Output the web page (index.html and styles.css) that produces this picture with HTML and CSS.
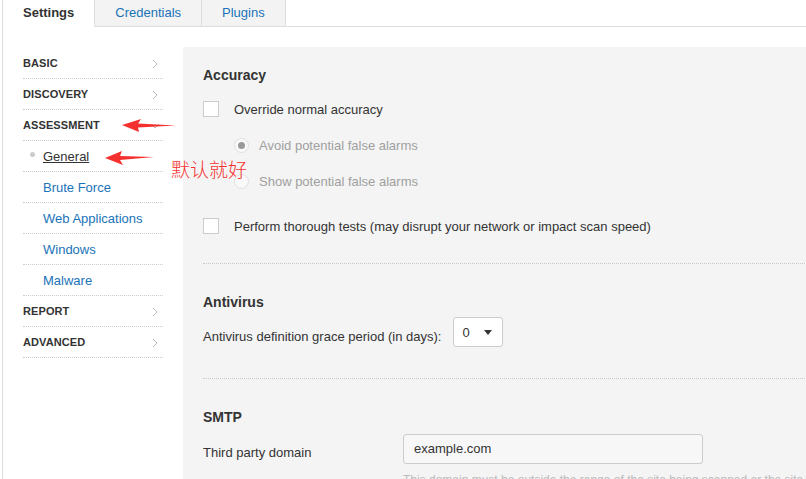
FILE: index.html
```html
<!DOCTYPE html>
<html>
<head>
<meta charset="utf-8">
<link rel="stylesheet" href="styles.css">
</head>
<body>
<div class="page">
  <ul class="tabs">
    <li class="tab active">Settings</li>
    <li class="tab">Credentials</li>
    <li class="tab">Plugins</li>
    <li class="tab-fill"></li>
  </ul>
  <div class="main">
    <nav class="sidebar">
      <div class="nav-item head"><span>BASIC</span><svg class="chev" width="6" height="10" viewBox="0 0 6 10"><path d="M1 1l4 4-4 4" fill="none" stroke="#bbb" stroke-width="1"/></svg></div>
      <div class="nav-item head"><span>DISCOVERY</span><svg class="chev" width="6" height="10" viewBox="0 0 6 10"><path d="M1 1l4 4-4 4" fill="none" stroke="#bbb" stroke-width="1"/></svg></div>
      <div class="nav-item head"><span>ASSESSMENT</span><svg class="chev down" width="10" height="6" viewBox="0 0 10 6"><path d="M1 1l4 4 4-4" fill="none" stroke="#bbb" stroke-width="1"/></svg></div>
      <div class="nav-item sub current"><span class="dot"></span><span class="cur-link">General</span></div>
      <div class="nav-item sub"><span class="link">Brute Force</span></div>
      <div class="nav-item sub"><span class="link">Web Applications</span></div>
      <div class="nav-item sub"><span class="link">Windows</span></div>
      <div class="nav-item sub"><span class="link">Malware</span></div>
      <div class="nav-item head"><span>REPORT</span><svg class="chev" width="6" height="10" viewBox="0 0 6 10"><path d="M1 1l4 4-4 4" fill="none" stroke="#bbb" stroke-width="1"/></svg></div>
      <div class="nav-item head"><span>ADVANCED</span><svg class="chev" width="6" height="10" viewBox="0 0 6 10"><path d="M1 1l4 4-4 4" fill="none" stroke="#bbb" stroke-width="1"/></svg></div>
    </nav>
    <section class="panel">
      <div class="group">
        <h2 class="title">Accuracy</h2>
        <div class="row check-row first"><span class="checkbox"></span><span>Override normal accuracy</span></div>
        <div class="row radio-row r1"><span class="radio checked"></span><span class="muted">Avoid potential false alarms</span></div>
        <div class="row radio-row r2"><span class="radio"></span><span class="muted">Show potential false alarms</span></div>
        <div class="row check-row last"><span class="checkbox"></span><span>Perform thorough tests (may disrupt your network or impact scan speed)</span></div>
      </div>
      <div class="group">
        <h2 class="title">Antivirus</h2>
        <div class="row select-row"><span class="sel-label">Antivirus definition grace period (in days):</span><span class="select"><span>0</span><span class="caret"></span></span></div>
      </div>
      <div class="group last-group">
        <h2 class="title">SMTP</h2>
        <div class="row field-row"><span class="field-label">Third party domain</span><span class="input">example.com</span></div>
        <div class="help">This domain must be outside the range of the site being scanned or the site being scanned</div>
      </div>
    </section>
  </div>
</div>

<svg class="arrow arrow1" width="60" height="20" viewBox="0 0 60 20"><polygon points="0,7 19,1 16,5.5 54,7.5 16,9.5 17,14" fill="#f5312f"/></svg>
<svg class="arrow arrow2" width="60" height="20" viewBox="0 0 60 20"><polygon points="0,7 17,0 15,5 49,6 15,9 18,14" fill="#f5312f"/></svg>
<div class="note">默认就好</div>
</body>
</html>
```

FILE: styles.css
```css
html, body {
  margin: 0;
  padding: 0;
  background: #fff;
}
body {
  font-family: "Liberation Sans", Arial, sans-serif;
  font-size: 13px;
  color: #333;
  width: 806px;
  height: 479px;
  overflow: hidden;
  position: relative;
}
.page {
  margin-left: 2px;
  border-left: 1px solid #ddd;
  height: 479px;
}
.tabs {
  list-style: none;
  margin: 0;
  padding: 0;
  display: flex;
  height: 27px;
}
.tab {
  padding: 0 20px;
  line-height: 26px;
  height: 26px;
  border-right: 1px solid #ddd;
  border-bottom: 1px solid #ddd;
  background: #f3f3f3;
  color: #1a73b8;
}
.tab.active {
  background: #fff;
  color: #333;
  font-weight: bold;
  border-bottom-color: #fff;
}
.tab-fill {
  flex: 1;
  border-bottom: 1px solid #ddd;
}
.main {
  display: flex;
  padding-top: 20px;
  height: 432px;
}
.sidebar {
  width: 140px;
  margin-left: 20px;
  margin-right: 20px;
  padding-top: 1px;
  flex: none;
}
.nav-item {
  height: 30px;
  border-bottom: 1px dotted #ccc;
  display: flex;
  align-items: center;
  position: relative;
}
.nav-item.head {
  font-size: 11px;
  font-weight: bold;
  color: #333;
  letter-spacing: 0.1px;
}
.chev {
  position: absolute;
  right: 5px;
  top: 11px;
}
.chev.down {
  right: 3px;
  top: 13px;
}
.nav-item.sub {
  padding-left: 20px;
}
.link {
  color: #1a73b8;
}
.cur-link {
  color: #333;
  text-decoration: underline;
}
.dot {
  position: absolute;
  left: 7px;
  top: 11px;
  width: 5px;
  height: 5px;
  border-radius: 50%;
  background: #ccc;
}
.panel {
  flex: 1;
  background: #f4f4f4;
  padding: 18px 0 0 20px;
}
.group {
  border-bottom: 1px dotted #c8c8c8;
}
.group.last-group {
  border-bottom: none;
}
.title {
  margin: 0;
  font-size: 14px;
  font-weight: bold;
  line-height: 20px;
  color: #333;
}
.group + .group .title {
  margin-top: 28px;
}
.row {
  display: flex;
  align-items: center;
  height: 18px;
}
.check-row.first {
  margin-top: 15px;
}
.radio-row {
  padding-left: 31px;
}
.radio-row.r1 {
  margin-top: 18px;
}
.radio-row.r2 {
  margin-top: 18px;
}
.check-row.last {
  margin-top: 27px;
  margin-bottom: 28px;
}
.checkbox {
  width: 14px;
  height: 14px;
  border: 1px solid #ccc;
  background: #fff;
  margin-right: 15px;
  flex: none;
}
.radio {
  width: 13px;
  height: 13px;
  border: 1px solid #e0e0e0;
  background: #f9f9f9;
  border-radius: 50%;
  margin-right: 10px;
  position: relative;
  flex: none;
}
.radio.checked::after {
  content: "";
  position: absolute;
  left: 3px;
  top: 3px;
  width: 7px;
  height: 7px;
  border-radius: 50%;
  background: #999;
}
.muted {
  color: #a0a0a0;
}
.select-row {
  height: 30px;
  margin-top: 5px;
  margin-bottom: 31px;
  align-items: center;
}
.sel-label {
  padding-top: 8px;
}
.select {
  margin-left: 12px;
  width: 48px;
  height: 28px;
  border: 1px solid #ccc;
  border-radius: 3px;
  background: #fff;
  display: flex;
  align-items: center;
  box-sizing: content-box;
}
.select span:first-child {
  margin-left: 8px;
}
.caret {
  margin-left: 14px;
  width: 0;
  height: 0;
  border-left: 4px solid transparent;
  border-right: 4px solid transparent;
  border-top: 5px solid #333;
}
.field-row {
  height: 30px;
  margin-top: 7px;
}
.field-label {
  width: 200px;
  flex: none;
  padding-top: 7px;
}
.input {
  width: 288px;
  height: 28px;
  line-height: 28px;
  border: 1px solid #ccc;
  border-radius: 3px;
  background: #f7f7f7;
  padding-left: 10px;
  color: #333;
}
.help {
  margin-left: 200px;
  margin-top: 9px;
  font-size: 12px;
  color: #bbb;
  white-space: nowrap;
}
.arrow {
  position: absolute;
}
.arrow1 {
  left: 122px;
  top: 118px;
}
.arrow2 {
  left: 105px;
  top: 151px;
}
.note {
  position: absolute;
  left: 171px;
  top: 157px;
  font-family: "Noto Sans CJK SC", sans-serif;
  font-size: 19px;
  line-height: 24px;
  color: #f5312f;
  font-weight: 300;
}
```
